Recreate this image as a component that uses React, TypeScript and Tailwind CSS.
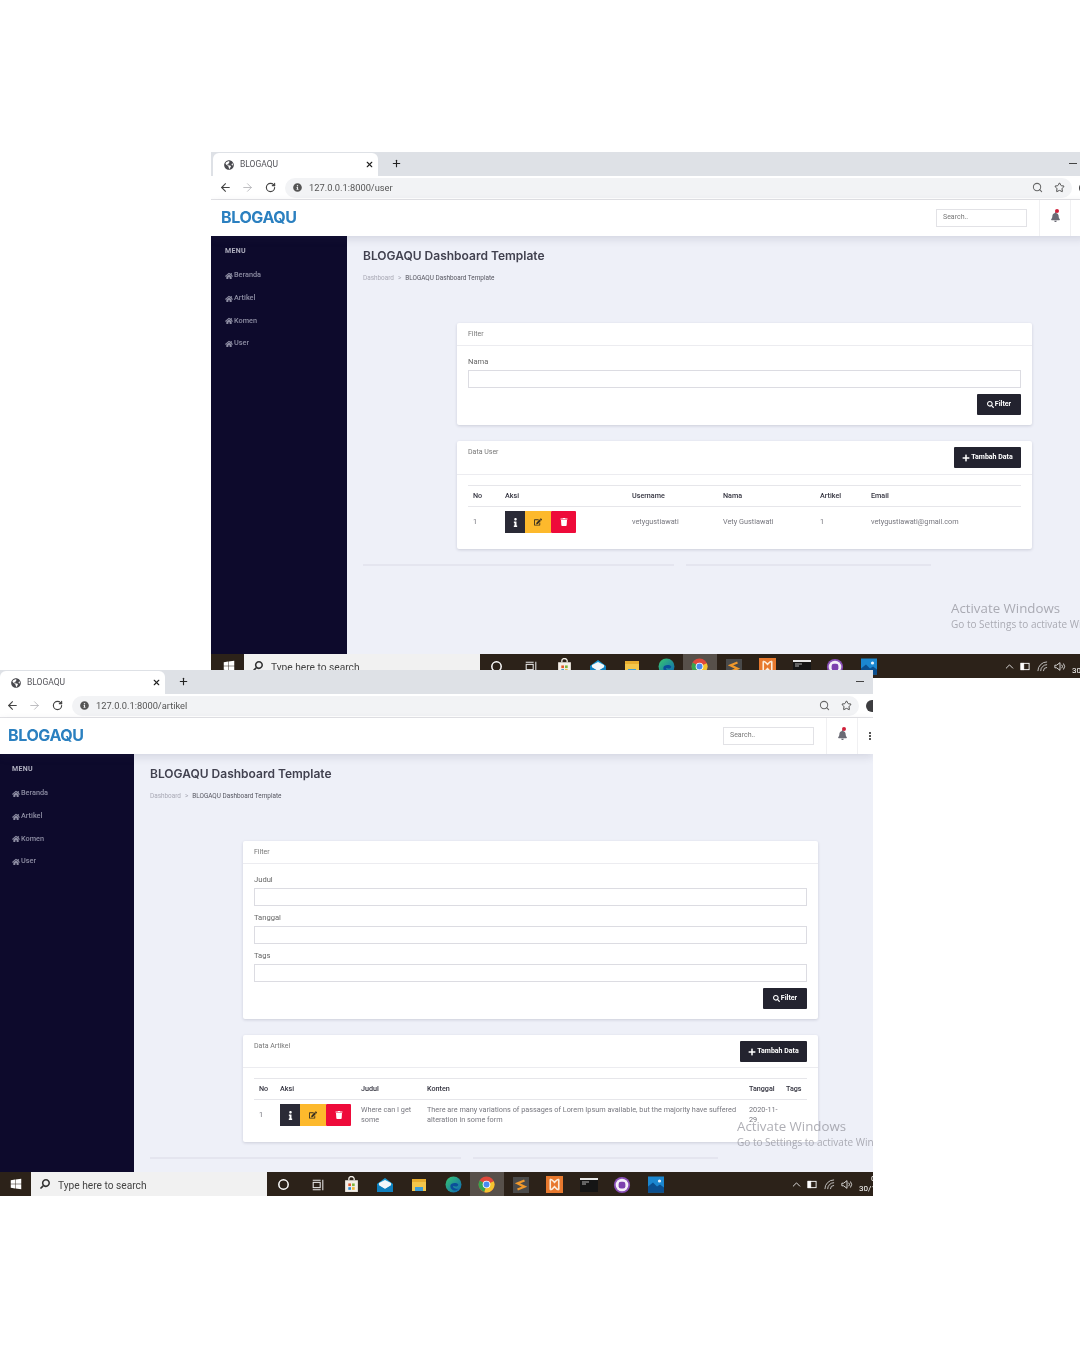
import { ArrowLeft, ArrowRight, ChevronUp, Plus, RotateCw, Search, Star, X } from 'lucide-react';
import { FaBell, FaEdit, FaGlobeAmericas, FaHome, FaInfo, FaInfoCircle, FaPlus, FaSearch, FaTrash, FaWindows } from 'react-icons/fa';
import { ReactNode } from 'react';

const MENU_ITEMS = ['Beranda', 'Artikel', 'Komen', 'User'];
const TEXT_FONT = "font-['Roboto','Liberation_Sans',sans-serif]";

const TaskIcons: ReactNode[] = [
  <svg key="cortana" viewBox="0 0 16 16" className="w-[15px] h-[15px]"><circle cx="8" cy="8" r="5" fill="none" stroke="#fff" strokeWidth="1.6" /></svg>,
  <svg key="view" viewBox="0 0 16 16" className="w-[14px] h-[14px]" fill="none" stroke="#e8e8e8" strokeWidth="1.2"><rect x="2.5" y="5" width="8" height="6" /><path d="M2 2.5h9M2 13.5h9M13.5 2v12" /></svg>,
  <svg key="store" viewBox="0 0 16 16" className="w-[17px] h-[17px]"><path d="M5.5 4V2.5a2.5 2 0 0 1 5 0V4" fill="none" stroke="#f5f1ea" strokeWidth="1.2" /><rect x="2" y="4" width="12" height="11" fill="#f4efe8" /><rect x="5" y="7" width="2.5" height="2.5" fill="#e2572b" /><rect x="8.5" y="7" width="2.5" height="2.5" fill="#7fb43a" /><rect x="5" y="10.5" width="2.5" height="2.5" fill="#2b8fd8" /><rect x="8.5" y="10.5" width="2.5" height="2.5" fill="#f2b632" /></svg>,
  <svg key="mail" viewBox="0 0 18 16" className="w-[18px] h-[16px]"><path d="M9 1l8 6v8H1V7z" fill="#1a9ad6" /><path d="M3 6l6-3 6 3v3l-6 3-6-3z" fill="#f3f7fa" /><path d="M1 7l8 5 8-5v8H1z" fill="#0f7fbd" /></svg>,
  <svg key="folder" viewBox="0 0 16 16" className="w-[16px] h-[16px]"><rect x="1" y="2" width="14" height="12" fill="#f3c64b" /><rect x="1" y="2" width="14" height="3" fill="#e8ad2e" /><rect x="4" y="10" width="8" height="4" fill="#3d9ed6" /></svg>,
  <svg key="edge" viewBox="0 0 16 16" className="w-[17px] h-[17px]"><defs><linearGradient id="edgeFill" x1="0" y1="0" x2="1" y2="1"><stop offset="0" stopColor="#38c96f" /><stop offset="1" stopColor="#0d63b8" /></linearGradient></defs><circle cx="8" cy="8" r="7.5" fill="url(#edgeFill)" /><path d="M5 9.5c0-3 5.5-4 7.5-1.5 0 2.5-3.5 2-5 1.5 0 2 2.5 3 5 2.5-2 3-7.5 2-7.5-2.5z" fill="#0b4f9a" /></svg>,
  <svg key="chrome" viewBox="0 0 16 16" className="w-[17px] h-[17px]"><circle cx="8" cy="8" r="7.5" fill="#e0493c" /><path d="M8 8L1.5 4.3A7.5 7.5 0 0 0 6 15.2z" fill="#37a44f" /><path d="M8 8l6.9-3A7.5 7.5 0 0 1 6 15.2z" fill="#f4c430" /><circle cx="8" cy="8" r="3.6" fill="#fff" /><circle cx="8" cy="8" r="2.8" fill="#4a8af0" /></svg>,
  <svg key="sublime" viewBox="0 0 16 16" className="w-[16px] h-[16px]"><rect width="16" height="16" fill="#4a4a4a" /><path d="M11.5 3.5L4.5 6.3l7 3.4-7 2.8" fill="none" stroke="#f0982b" strokeWidth="2.2" /></svg>,
  <svg key="xampp" viewBox="0 0 16 16" className="w-[17px] h-[17px]"><rect width="16" height="16" fill="#e8792e" /><path d="M4 3c2 0 3 2 4 3 1-1 2-3 4-3M4 13c2 0 3-2 4-3 1 1 2 3 4 3M4 3v10M12 3v10" fill="none" stroke="#fbeede" strokeWidth="1.5" /></svg>,
  <svg key="cmd" viewBox="0 0 18 16" className="w-[18px] h-[16px]"><rect y="1" width="18" height="14" fill="#151515" /><rect y="1" width="18" height="2" fill="#e6e6e6" /><path d="M2 5h7M2 7h4" stroke="#ddd" strokeWidth="0.8" /></svg>,
  <svg key="viber" viewBox="0 0 16 16" className="w-[18px] h-[18px]"><circle cx="8" cy="8" r="7.2" fill="#8a4fb8" /><circle cx="8" cy="8" r="5.6" fill="#f4eef8" /><rect x="5" y="5" width="6" height="6" rx="2" fill="#7c3fae" /></svg>,
  <svg key="photos" viewBox="0 0 16 16" className="w-[16px] h-[17px]"><rect width="16" height="16" fill="#1b87d0" /><path d="M0 16V10l5-4 4 4 3-2 4 3v5z" fill="#0b4f8f" /><circle cx="11.5" cy="4.5" r="1.6" fill="#e8f4fc" /></svg>,
];

const Field = ({ label }: { label: string }) => (
  <div className="mb-[6px]">
    <label className="block h-[12px] mb-[2px] text-[7.6px] leading-[12px] text-[#666]">{label}</label>
    <div className="h-[18px] border border-[#dcdce2] bg-white" />
  </div>
);

const DarkButton = ({ children, className }: { children: ReactNode; className: string }) => (
  <button className={`h-[21px] bg-[#23232f] flex items-center justify-center gap-[1px] text-[7px] font-bold text-white rounded-[1px] ${className}`}>
    {children}
  </button>
);

const RowActions = () => (
  <div className="flex h-[22px]">
    <span className="w-[20px] bg-[#2a2a36] flex items-center justify-center"><FaInfo className="w-[9px] h-[9px] text-white" /></span>
    <span className="w-[26px] bg-[#fdb92c] flex items-center justify-center"><FaEdit className="w-[8px] h-[8px] text-[#3a3020]" /></span>
    <span className="w-[25px] bg-[#ee0b3a] flex items-center justify-center rounded-[1px]"><FaTrash className="w-[8px] h-[8px] text-white" /></span>
  </div>
);

const Th = ({ children }: { children?: ReactNode }) => (
  <th className="h-[21px] pt-[1px] pl-[5px] text-left text-[7.2px] font-medium text-[#33333f] border-t border-b border-[#e6e6ea]">{children}</th>
);

const Td = ({ children }: { children?: ReactNode }) => (
  <td className="pt-[4px] pb-[6px] pl-[5px] pr-[2px] align-middle text-[7.3px] leading-[10px] text-[#77777f]">{children}</td>
);

const Taskbar = ({ bleed }: { bleed?: boolean }) => (
  <div className={`h-[24px] flex items-center bg-[#2c2219] ${bleed ? 'pl-[2px] w-[875px]' : 'w-[873px]'}`}>
    <div className="w-[31px] flex justify-center"><FaWindows className="w-[12px] h-[12px] text-white" /></div>
    <div className="w-[236px] h-full bg-[#f1f1f1] flex items-center">
      <FaSearch className="ml-[9px] w-[10px] h-[10px] text-[#333] -scale-x-100" />
      <span className={`ml-[8px] pt-[3px] text-[10.2px] text-[#444] ${TEXT_FONT}`}>Type here to search</span>
    </div>
    {TaskIcons.map((icon, i) => (
      <div key={i} className={`w-[33.85px] h-full pt-[1px] flex items-center justify-center ${i === 6 ? 'bg-[#57504a]' : ''}`}>{icon}</div>
    ))}
    <div className="ml-auto flex items-center gap-[6px] text-white">
      <ChevronUp className="-mr-[2px] w-[13px] h-[13px]" strokeWidth={1.5} />
      <svg viewBox="0 0 12 10" className="w-[11px] h-[9px]" fill="none" stroke="#fff"><rect x="1" y="1.5" width="9" height="7" /><rect x="1" y="1.5" width="3" height="7" fill="#fff" /></svg>
      <svg viewBox="0 0 12 12" className="w-[11px] h-[11px]" fill="none" stroke="#ddd" strokeWidth="0.9"><path d="M1 11A10 10 0 0 1 11 1M4 11a7 7 0 0 1 7-7M7 11a4 4 0 0 1 4-4" /></svg>
      <svg viewBox="0 0 14 12" className="w-[12px] h-[11px]" fill="none" stroke="#eee" strokeWidth="1"><path d="M1 4.5h2L7 1.5v9L3 7.5H1zM9 4a3 3 0 0 1 0 4M11 2.5a5.5 5.5 0 0 1 0 7" /></svg>
      <div className={`w-[14px] text-[8px] leading-[10px] whitespace-nowrap ${TEXT_FONT}`}>
        <div className="pl-[12px]">0</div>
        <div>30/11</div>
      </div>
    </div>
  </div>
);

type WindowProps = {
  url: string;
  wrapperClass: string;
  bleed?: boolean;
  children: ReactNode;
};

const BrowserWindow = ({ url, wrapperClass, bleed, children }: WindowProps) => (
  <div className={`absolute h-[526px] overflow-hidden bg-white ${wrapperClass}`}>
    {/* Tabs */}
    <div className={`h-[24px] flex items-end bg-[#dee1e6] ${bleed ? 'pl-[2px] w-[875px]' : 'w-[873px]'}`}>
      <div className="w-[165px] h-[23px] bg-white rounded-t-md flex items-center pl-[11px] pr-[4px]">
        <FaGlobeAmericas className="w-[10px] h-[10px] text-[#4a4a4f]" />
        <span className={`ml-[6px] text-[8.5px] text-[#55555b] ${TEXT_FONT}`}>BLOGAQU</span>
        <X className="ml-auto w-[9px] h-[9px] text-[#222]" strokeWidth={3} />
      </div>
      <Plus className="ml-[13px] mb-[7px] w-[11px] h-[11px] text-[#222]" strokeWidth={2.5} />
      <div className="ml-auto mr-[9px] mb-[12px] w-[8px] h-[1px] bg-[#444]" />
    </div>

    {/* Toolbar */}
    <div className={`h-[24px] flex items-center bg-white border-b border-[#e3e3e6] ${bleed ? 'pl-[2px] w-[875px]' : 'w-[873px]'}`}>
      <ArrowLeft className="ml-[6px] w-[13px] h-[13px] shrink-0 text-[#444]" strokeWidth={2} />
      <ArrowRight className="ml-[9px] w-[13px] h-[13px] shrink-0 text-[#b0b0b4]" strokeWidth={1.5} />
      <RotateCw className="ml-[11px] w-[11px] h-[11px] shrink-0 text-[#444]" strokeWidth={2.5} />
      <div className="ml-[9px] w-[787px] h-[20px] shrink-0 rounded-full bg-[#f2f3f5] flex items-center pl-[8px] pr-[7px]">
        <FaInfoCircle className="w-[9px] h-[9px] text-[#555]" />
        <span className={`ml-[7px] text-[9.3px] text-[#555] ${TEXT_FONT}`}>{url}</span>
        <Search className="ml-auto w-[11px] h-[11px] text-[#666]" strokeWidth={2.2} />
        <Star className="ml-[11px] w-[11px] h-[11px] text-[#444]" strokeWidth={2} />
      </div>
      <div className="ml-[7px] w-[12px] h-[12px] shrink-0 rounded-full bg-[#3d3d40]" />
    </div>

    {/* Navbar */}
    <div className={`relative z-10 h-[36px] flex items-center bg-white shadow-[0_3px_8px_rgba(60,60,90,0.14)] ${bleed ? 'pl-[2px] w-[875px]' : 'w-[873px]'}`}>
      <span className="ml-[8px] mb-[2px] text-[16px] font-bold tracking-[-0.4px] text-[#2b80c0] font-['Inter','Liberation_Sans',sans-serif]">BLOGAQU</span>
      <div className="ml-auto flex items-center h-full">
        <div className={`w-[91px] h-[18px] mb-[1px] border border-[#e2e2e6] flex items-center pl-[6px] text-[7px] text-[#777] ${TEXT_FONT}`}>Search..</div>
        <div className="relative ml-[12px] w-[32px] h-full border-l border-r border-[#f0f0f2] flex items-center justify-center">
          <FaBell className="mb-[3px] w-[9px] h-[10px] text-[#6b6b75]" />
          <span className="absolute top-[9px] right-[11px] w-[4px] h-[4px] rounded-full bg-[#d0203a]" />
        </div>
        <div className="w-[15px] pl-[9px] flex flex-col items-center gap-[1px]">
          <span className="w-[2px] h-[2px] bg-[#555]" />
          <span className="w-[2px] h-[2px] bg-[#555]" />
          <span className="w-[2px] h-[2px] bg-[#555]" />
        </div>
      </div>
    </div>

    <div className={`relative h-[418px] flex ${bleed ? 'w-[875px]' : 'w-[873px]'}`}>
      {/* Sidebar */}
      <aside className={`shrink-0 bg-[#0d0a2c] pt-[11px] text-[#8d8da3] ${TEXT_FONT} ${bleed ? 'w-[136px] pl-[14px]' : 'w-[134px] pl-[12px]'}`}>
        <div className="h-[8px] text-[7px] leading-[8px] font-bold tracking-[0.3px] text-[#b0b0c0]">MENU</div>
        <nav className="mt-[9.5px]">
          {MENU_ITEMS.map((item) => (
            <div key={item} className="h-[22.7px] flex items-center gap-[1px] text-[7.3px] font-medium">
              <FaHome className="w-[8px] h-[8px]" />
              {item}
            </div>
          ))}
        </nav>
      </aside>

      {/* Content */}
      <main className={`flex-1 min-w-0 bg-[#eef0f8] pt-[11px] px-[16px] ${TEXT_FONT}`}>
        <h1 className="h-[18px] text-[12px] leading-[18px] font-semibold text-[#41414f] font-['Inter','Liberation_Sans',sans-serif]">BLOGAQU Dashboard Template</h1>
        <div className="mt-[9px] h-[10px] flex items-center gap-[4px] text-[6.4px]">
          <span className="text-[#a9a9b5]">Dashboard</span>
          <span className="text-[#a9a9b5]">&gt;</span>
          <span className="text-[#55555f]">BLOGAQU Dashboard Template</span>
        </div>
        <div className={`mt-[39px] w-[575px] ${bleed ? 'ml-[94px]' : 'ml-[93px]'}`}>{children}</div>
        <div className="mt-[15px] flex gap-[12px]">
          <div className="w-[311px] h-[2px] bg-[#e4e5ef]" />
          <div className="w-[245px] h-[2px] bg-[#e4e5ef]" />
        </div>
      </main>

      {/* Watermark */}
      <div className={`absolute top-[363px] whitespace-nowrap text-[#8d8d96] font-['Open_Sans','Liberation_Sans',sans-serif] ${bleed ? 'left-[740px]' : 'left-[737px]'}`}>
        <div className="text-[13.3px] leading-[18px] opacity-70">Activate Windows</div>
        <div className="text-[10px] leading-[14px] opacity-70">Go to Settings to activate Windows.</div>
      </div>
    </div>

    <Taskbar bleed={bleed} />
  </div>
);

const Card = ({ children }: { children: ReactNode }) => (
  <section className="bg-white rounded-[2px] shadow-[0_1px_3px_rgba(70,70,100,0.2)]">{children}</section>
);

const FilterCard = ({ fields }: { fields: string[] }) => (
  <Card>
    <div className="h-[23px] px-[11px] flex items-center border-b border-[#ececf0] text-[7px] text-[#777]">Filter</div>
    <div className="px-[11px] pt-[10px] pb-[10px]">
      {fields.map((field) => <Field key={field} label={field} />)}
      <div className="flex justify-end">
        <DarkButton className="w-[44px]"><FaSearch className="w-[7px] h-[7px]" />Filter</DarkButton>
      </div>
    </div>
  </Card>
);

const DataHeader = ({ title, heightClass }: { title: string; heightClass: string }) => (
  <div className={`pl-[11px] pr-[11px] flex justify-between border-b border-[#ececf0] ${heightClass}`}>
    <span className="pt-[6px] text-[7px] text-[#777]">{title}</span>
    <DarkButton className="mt-[6px] w-[67px]"><FaPlus className="w-[8px] h-[8px]" />Tambah Data</DarkButton>
  </div>
);

const UserPanel = () => (
  <>
    <FilterCard fields={['Nama']} />
    <div className="mt-[16px]">
      <Card>
        <DataHeader title="Data User" heightClass="h-[34px]" />
        <div className="px-[11px] pt-[10px] pb-[10px]">
          <table className="w-[553px] table-fixed border-collapse">
            <colgroup>
              <col className="w-[32px]" /><col className="w-[127px]" /><col className="w-[91px]" /><col className="w-[97px]" /><col className="w-[51px]" /><col />
            </colgroup>
            <thead>
              <tr><Th>No</Th><Th>Aksi</Th><Th>Username</Th><Th>Nama</Th><Th>Artikel</Th><Th>Email</Th></tr>
            </thead>
            <tbody>
              <tr>
                <Td>1</Td>
                <Td><RowActions /></Td>
                <Td>vetygustiawati</Td>
                <Td>Vety Gustiawati</Td>
                <Td>1</Td>
                <Td>vetygustiawati@gmail.com</Td>
              </tr>
            </tbody>
          </table>
        </div>
      </Card>
    </div>
  </>
);

const ArticlePanel = () => (
  <>
    <FilterCard fields={['Judul', 'Tanggal', 'Tags']} />
    <div className="mt-[16px]">
      <Card>
        <DataHeader title="Data Artikel" heightClass="h-[33px]" />
        <div className="px-[11px] pt-[10px] pb-[10px]">
          <table className="w-[553px] table-fixed border-collapse">
            <colgroup>
              <col className="w-[21px]" /><col className="w-[81px]" /><col className="w-[66px]" /><col className="w-[322px]" /><col className="w-[37px]" /><col />
            </colgroup>
            <thead>
              <tr><Th>No</Th><Th>Aksi</Th><Th>Judul</Th><Th>Konten</Th><Th>Tanggal</Th><Th>Tags</Th></tr>
            </thead>
            <tbody>
              <tr>
                <Td>1</Td>
                <Td><RowActions /></Td>
                <Td>Where can I get some</Td>
                <Td>There are many variations of passages of Lorem Ipsum available, but the majority have suffered alteration in some form</Td>
                <Td>2020-11-29</Td>
                <Td />
              </tr>
            </tbody>
          </table>
        </div>
      </Card>
    </div>
  </>
);

export default function App() {
  return (
    <div className="relative w-[1080px] h-[1350px] overflow-hidden bg-white blur-[0.3px]">
      <BrowserWindow url="127.0.0.1:8000/user" wrapperClass="left-[211px] top-[152px] w-[869px]" bleed>
        <UserPanel />
      </BrowserWindow>
      <BrowserWindow url="127.0.0.1:8000/artikel" wrapperClass="left-0 top-[670px] w-[873px]">
        <ArticlePanel />
      </BrowserWindow>
    </div>
  );
}
